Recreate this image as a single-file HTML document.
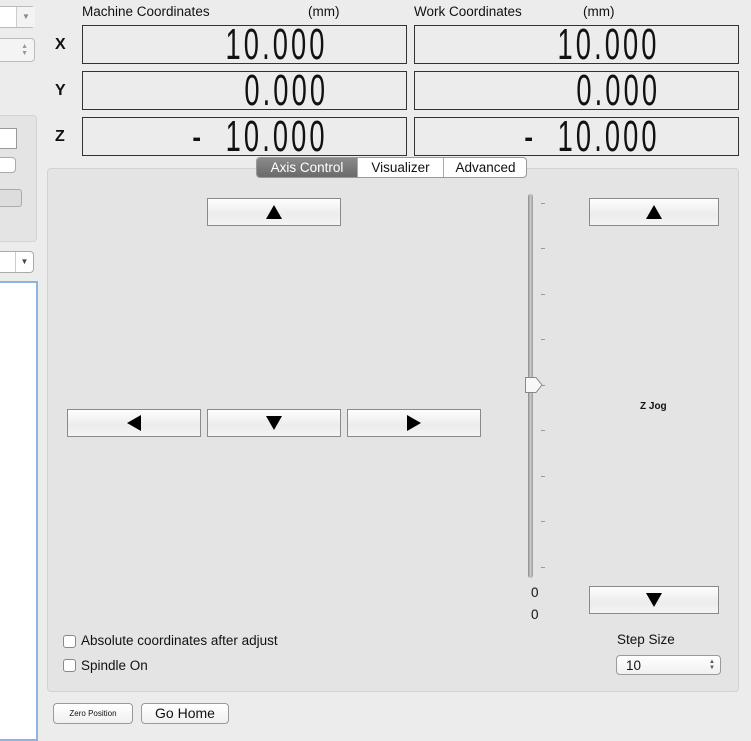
<!DOCTYPE html><html><head><style>
*{box-sizing:border-box;margin:0;padding:0}
body{width:751px;height:730px;background:#ececec;font-family:"Liberation Sans",sans-serif;font-size:13.5px;color:#111;position:relative;overflow:hidden}
.a{position:absolute}
.lcd{position:absolute;border:1px solid #333;background:#ececec;height:39px;width:325px;overflow:hidden}
.lcd span{position:absolute;right:78px;top:-6px;font-family:"Liberation Sans Narrow","Liberation Sans",sans-serif;font-size:44px;letter-spacing:5px;color:#111;transform:scaleX(.62);transform-origin:right;white-space:pre}
.lbl{position:absolute;font-size:16px;font-weight:bold}
.btn{position:absolute;border:1px solid #8a8a8a;background:linear-gradient(#fdfdfd,#ececec 60%,#f4f4f4);height:28px;width:134px}
.btn svg{position:absolute;left:50%;top:50%;transform:translate(-50%,-50%)}
.rb{position:absolute;border:1px solid #9a9a9a;border-radius:4px;background:linear-gradient(#fff,#f0f0f0);text-align:center}
.cb{position:absolute;width:13px;height:13px;border:1px solid #888;border-radius:3px;background:#fff}
.tick{position:absolute;left:541px;width:4px;height:1px;background:#999}
</style></head><body>
<div class="a" style="left:-5px;top:6px;width:40px;height:22px;border:1px solid #bbb;border-radius:4px;background:#fff"></div>
<div class="a" style="left:16px;top:7px;width:19px;height:20px;background:#f3f3f3;border-left:1px solid #ccc;font-size:8px;color:#888;text-align:center;line-height:20px">▼</div>
<div class="a" style="left:-5px;top:38px;width:40px;height:24px;border:1px solid #bbb;border-radius:4px;background:#f4f4f4;font-size:7px;color:#999;text-align:right;padding:4px 6px 0 0;line-height:7px">▲<br>▼</div>
<div class="a" style="left:-5px;top:115px;width:42px;height:127px;border:1px solid #d3d3d3;border-radius:4px;background:#e4e4e4"></div>
<div class="a" style="left:-2px;top:128px;width:19px;height:21px;border:1px solid #999;background:#fff"></div>
<div class="a" style="left:-5px;top:157px;width:21px;height:16px;border:1px solid #aaa;border-radius:4px;background:#fff"></div>
<div class="a" style="left:-5px;top:189px;width:27px;height:18px;border:1px solid #aaa;border-radius:3px;background:#ddd"></div>
<div class="a" style="left:-5px;top:251px;width:39px;height:22px;border:1px solid #aaa;border-radius:4px;background:#fff"></div>
<div class="a" style="left:15px;top:252px;width:18px;height:20px;border-left:1px solid #ccc;font-size:8px;color:#444;text-align:center;line-height:20px">▼</div>
<div class="a" style="left:-5px;top:281px;width:43px;height:460px;border:2px solid #8db4e0;background:#fff"></div>
<div class="a" style="left:82px;top:4px">Machine Coordinates</div>
<div class="a" style="left:308px;top:4px">(mm)</div>
<div class="a" style="left:414px;top:4px">Work Coordinates</div>
<div class="a" style="left:583px;top:4px">(mm)</div>
<div class="lbl" style="left:55px;top:36px">X</div>
<div class="lbl" style="left:55px;top:82px">Y</div>
<div class="lbl" style="left:55px;top:128px">Z</div>
<div class="lcd" style="left:82px;top:25px"><span>10.000</span></div>
<div class="lcd" style="left:414px;top:25px"><span>10.000</span></div>
<div class="lcd" style="left:82px;top:71px"><span>0.000</span></div>
<div class="lcd" style="left:414px;top:71px"><span>0.000</span></div>
<div class="lcd" style="left:82px;top:117px"><span>-  10.000</span></div>
<div class="lcd" style="left:414px;top:117px"><span>-  10.000</span></div>
<div class="a" style="left:47px;top:168px;width:692px;height:524px;border:1px solid #d2d2d2;border-radius:4px;background:#e4e4e4"></div>
<div class="a" style="left:256px;top:157px;width:271px;height:21px;border:1px solid #999;border-radius:4px;background:#fff;overflow:hidden">
<div class="a" style="left:0;top:0;width:100px;height:19px;background:linear-gradient(#8a8a8a,#6a6a6a);color:#fff;text-align:center;line-height:19px">Axis Control</div>
<div class="a" style="left:100px;top:0;width:86px;height:19px;border-left:1px solid #aaa;text-align:center;line-height:19px">Visualizer</div>
<div class="a" style="left:186px;top:0;width:84px;height:19px;border-left:1px solid #aaa;text-align:center;line-height:19px">Advanced</div>
</div>
<div class="btn" style="left:207px;top:198px"><svg width="16" height="14"><path d="M8 0L16 14H0Z"/></svg></div>
<div class="btn" style="left:67px;top:409px"><svg width="14" height="16"><path d="M0 8L14 0V16Z"/></svg></div>
<div class="btn" style="left:207px;top:409px"><svg width="16" height="14"><path d="M0 0H16L8 14Z"/></svg></div>
<div class="btn" style="left:347px;top:409px"><svg width="14" height="16"><path d="M14 8L0 0V16Z"/></svg></div>
<div class="btn" style="left:589px;top:198px;width:130px"><svg width="16" height="14"><path d="M8 0L16 14H0Z"/></svg></div>
<div class="btn" style="left:589px;top:586px;width:130px"><svg width="16" height="14"><path d="M0 0H16L8 14Z"/></svg></div>
<div class="a" style="left:528px;top:194px;width:5px;height:384px;border-radius:3px;background:linear-gradient(90deg,#888,#ccc,#999)"></div>
<div class="tick" style="top:203px"></div><div class="tick" style="top:248px"></div><div class="tick" style="top:294px"></div><div class="tick" style="top:339px"></div><div class="tick" style="top:385px"></div><div class="tick" style="top:430px"></div><div class="tick" style="top:476px"></div><div class="tick" style="top:521px"></div><div class="tick" style="top:567px"></div>
<svg class="a" style="left:524px;top:376px" width="20" height="18"><path d="M1.5 1.5H12L18 9L12 16.5H1.5Z" fill="#f7f7f7" stroke="#888"/></svg>
<div class="a" style="left:640px;top:401px;font-size:10px;font-weight:bold">Z Jog</div>
<div class="a" style="left:531px;top:585px">0</div>
<div class="a" style="left:531px;top:607px">0</div>
<div class="cb" style="left:63px;top:635px"></div>
<div class="a" style="left:81px;top:633px">Absolute coordinates after adjust</div>
<div class="cb" style="left:63px;top:659px"></div>
<div class="a" style="left:81px;top:658px">Spindle On</div>
<div class="a" style="left:617px;top:632px">Step Size</div>
<div class="rb" style="left:616px;top:655px;width:105px;height:20px;text-align:left;padding:2px 0 0 9px">10<span class="a" style="right:5px;top:3px;font-size:6px;line-height:6px;color:#555">▲<br>▼</span></div>
<div class="rb" style="left:53px;top:703px;width:80px;height:21px;font-size:8px;line-height:19px">Zero Position</div>
<div class="rb" style="left:141px;top:703px;width:88px;height:21px;font-size:14px;line-height:19px">Go Home</div>
</body></html>
